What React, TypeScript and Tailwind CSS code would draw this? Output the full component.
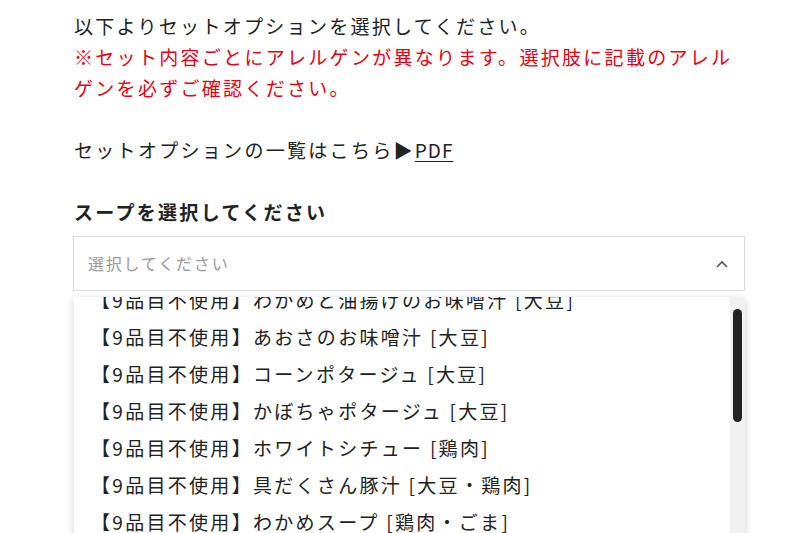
import React from "react";

const items = [
  "【9品目不使用】わかめと油揚げのお味噌汁 [大豆]",
  "【9品目不使用】あおさのお味噌汁 [大豆]",
  "【9品目不使用】コーンポタージュ [大豆]",
  "【9品目不使用】かぼちゃポタージュ [大豆]",
  "【9品目不使用】ホワイトシチュー [鶏肉]",
  "【9品目不使用】具だくさん豚汁 [大豆・鶏肉]",
  "【9品目不使用】わかめスープ [鶏肉・ごま]",
  "【9品目不使用】中華スープ [鶏肉・ごま]",
];

export default function App() {
  return (
    <div
      className="w-[800px] h-[533px] overflow-hidden bg-white"
      style={{ fontFamily: '"Noto Sans CJK JP", "Noto Sans", sans-serif' }}
    >
      <div className="ml-[74px] w-[671px] pt-[10px] text-[19px] leading-[31px] tracking-[2.3px] text-[#222]">
        <p>以下よりセットオプションを選択してください。</p>
        <p className="text-[#e60012]">
          ※セット内容ごとにアレルゲンが異なります。選択肢に記載のアレル
          <br />
          ゲンを必ずご確認ください。
        </p>
        <p className="mt-[31px]">
          セットオプションの一覧はこちら▶<span className="underline underline-offset-[3px] tracking-[1px]">PDF</span>
        </p>
        <p className="mt-[31px] font-bold">スープを選択してください</p>
        <div className="-ml-[1px] mt-[9px] flex h-[55px] items-center justify-between border border-[#dcdcdc] bg-white pl-[14px] pr-[14px]">
          <span className="text-[16px] tracking-[1.8px] text-[#9a9a9a]">選択してください</span>
          <svg width="14" height="10" viewBox="0 0 14 10" className="mr-[1px]">
            <polyline points="2,8 7,3 12,8" fill="none" stroke="#555" strokeWidth="1.6" />
          </svg>
        </div>
        <div className="mt-[6px] flex h-[240px] overflow-hidden bg-white shadow-[0_2px_8px_rgba(0,0,0,0.18)]">
          <div className="flex-1 overflow-hidden">
            <div className="-mt-[16px]">
              {items.map((t) => (
                <div key={t} className="flex h-[37px] items-center pl-[17px] whitespace-nowrap">
                  {t}
                </div>
              ))}
            </div>
          </div>
          <div className="w-[15px] bg-[#f1f1f1] pt-[12px]">
            <div className="mx-auto h-[113px] w-[9px] rounded-full bg-[#222]" />
          </div>
        </div>
      </div>
    </div>
  );
}
